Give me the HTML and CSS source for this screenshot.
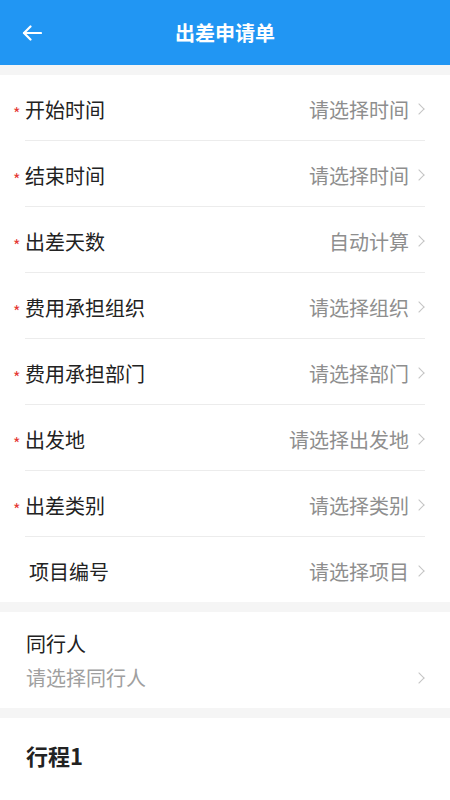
FILE: index.html
```html
<!DOCTYPE html>
<html lang="zh-CN">
  <head>
    <meta charset="UTF-8" />
    <meta name="viewport" content="width=device-width, initial-scale=1.0" />
    <title>出差申请单</title>
    <link rel="stylesheet" href="styles.css">
  </head>
  <body>
    <header class="top-bar">
      <button class="back-btn" type="button" aria-label="返回">
        <svg width="20" height="16" viewBox="0 0 20 16" fill="none" stroke="#fff" stroke-width="2.2" stroke-linecap="round" stroke-linejoin="round">
          <path d="M19 8H2" />
          <path d="M8.5 1.5L2 8l6.5 6.5" />
        </svg>
      </button>
      <h1>出差申请单</h1>
      <span></span>
    </header>

    <section class="card">
      <div class="row">
        <span class="label"><i class="star">*</i>开始时间</span>
        <span class="value">请选择时间<b class="chev"></b></span>
      </div>
      <div class="row">
        <span class="label"><i class="star">*</i>结束时间</span>
        <span class="value">请选择时间<b class="chev"></b></span>
      </div>
      <div class="row">
        <span class="label"><i class="star">*</i>出差天数</span>
        <span class="value">自动计算<b class="chev"></b></span>
      </div>
      <div class="row">
        <span class="label"><i class="star">*</i>费用承担组织</span>
        <span class="value">请选择组织<b class="chev"></b></span>
      </div>
      <div class="row">
        <span class="label"><i class="star">*</i>费用承担部门</span>
        <span class="value">请选择部门<b class="chev"></b></span>
      </div>
      <div class="row">
        <span class="label"><i class="star">*</i>出发地</span>
        <span class="value">请选择出发地<b class="chev"></b></span>
      </div>
      <div class="row">
        <span class="label"><i class="star">*</i>出差类别</span>
        <span class="value">请选择类别<b class="chev"></b></span>
      </div>
      <div class="row">
        <span class="label plain">项目编号</span>
        <span class="value">请选择项目<b class="chev"></b></span>
      </div>
    </section>

    <section class="card companion">
      <div class="companion-title">同行人</div>
      <div class="companion-pick">
        <span>请选择同行人</span>
        <b class="chev"></b>
      </div>
    </section>

    <section class="card trip">
      <h2>行程1</h2>
    </section>
  </body>
</html>
```

FILE: styles.css
```css
* {
  margin: 0;
  padding: 0;
  box-sizing: border-box;
  font-family: "Noto Sans CJK SC", "Noto Sans", sans-serif;
}
body {
  background-color: #f5f5f5;
  width: 450px;
}
.top-bar {
  height: 65px;
  background-color: #2196f3;
  display: grid;
  grid-template-columns: 1fr auto 1fr;
  align-items: center;
}
.top-bar h1 {
  color: #fff;
  font-size: 20px;
  font-weight: bold;
  line-height: 24px;
}
.back-btn {
  justify-self: start;
  margin-left: 22px;
  border: none;
  background: none;
  display: flex;
  cursor: pointer;
}
.card {
  background-color: #fff;
  margin-top: 10px;
}
.row {
  height: 66px;
  margin: 0 25px;
  padding-top: 3px;
  display: flex;
  align-items: center;
  justify-content: space-between;
  border-bottom: 1px solid #ececec;
}
.row:last-child {
  height: 65px;
  border-bottom: none;
}
.label {
  font-size: 20px;
  color: #222;
  display: flex;
  align-items: center;
}
.label.plain {
  padding-left: 4px;
}
.star {
  font-style: normal;
  color: #e53935;
  font-size: 16px;
  width: 12px;
  margin-left: -12px;
  padding-top: 7px;
}
.value {
  font-size: 20px;
  color: #8e8e8e;
  display: flex;
  align-items: center;
}
.chev {
  width: 8px;
  height: 8px;
  border-top: 1.5px solid #c4c4c4;
  border-right: 1.5px solid #c4c4c4;
  transform: rotate(45deg);
  margin-left: 6px;
  margin-right: 2px;
}
.companion {
  padding: 20px 25px 18px 26px;
}
.companion-title {
  font-size: 20px;
  line-height: 24px;
  color: #222;
}
.companion-pick {
  margin-top: 10px;
  display: flex;
  align-items: center;
  justify-content: space-between;
  font-size: 20px;
  line-height: 24px;
  color: #a0a0a0;
}
.trip {
  padding: 23px 26px 40px;
}
.trip h2 {
  font-size: 22px;
  font-weight: bold;
  color: #222;
  line-height: 28px;
}
```
